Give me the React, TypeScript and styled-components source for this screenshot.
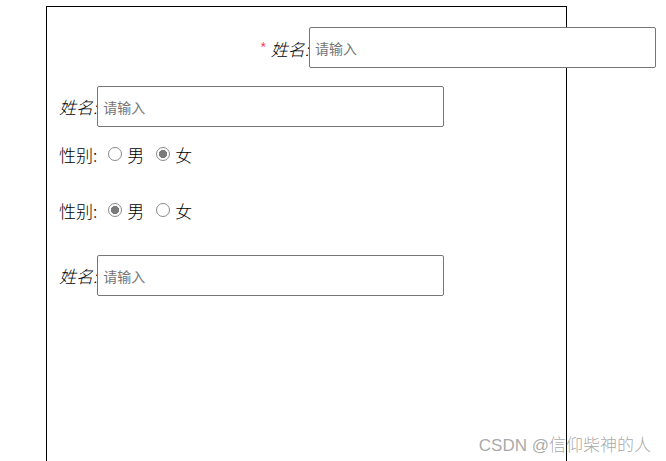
import React from "react";
import styled, { createGlobalStyle } from "styled-components";

const GlobalStyle = createGlobalStyle`
  html, body {
    margin: 0;
    padding: 0;
    background: #fff;
    overflow: hidden;
  }
  body {
    font-family: "Noto Sans CJK SC", "Liberation Sans", sans-serif;
  }
`;

function App() {
  return (
    <Page>
      <GlobalStyle />
      <Box>
        <Row $top={20}>
          <Label $wide>
            <Star>*</Star> 姓名:
          </Label>
          <Input placeholder="请输入" />
        </Row>
        <Row $top={18}>
          <Label>姓名:</Label>
          <Input placeholder="请输入" />
        </Row>
        <RadioRow $top={15}>
          <Plain>性别:</Plain>
          <Option>
            <Radio />男
          </Option>
          <Option>
            <Radio $checked />女
          </Option>
        </RadioRow>
        <RadioRow $top={32}>
          <Plain>性别:</Plain>
          <Option>
            <Radio $checked />男
          </Option>
          <Option>
            <Radio />女
          </Option>
        </RadioRow>
        <Row $top={33}>
          <Label>姓名:</Label>
          <Input placeholder="请输入" />
        </Row>
      </Box>
      <Watermark>CSDN @信仰柴神的人</Watermark>
    </Page>
  );
}

export default App;

const Page = styled.div`
  position: relative;
  width: 666px;
  height: 461px;
  overflow: hidden;
`;

const Box = styled.div`
  margin: 6px 0 0 46px;
  width: 521px;
  height: 520px;
  box-sizing: border-box;
  border: 1px solid #000;
  padding: 0 12px;
  display: flex;
  flex-direction: column;
`;

const Row = styled.div<{ $top: number }>`
  display: flex;
  align-items: center;
  margin-top: ${(p) => p.$top}px;
  height: 41px;
  white-space: nowrap;
`;

const Label = styled.span<{ $wide?: boolean }>`
  font-size: 17px;
  font-weight: 300;
  font-style: italic;
  color: #000;
  ${(p) => (p.$wide ? "width: 250px; text-align: right; flex-shrink: 0;" : "")}
`;

const Star = styled.span`
  color: #ff3b5c;
  font-size: 17px;
  font-style: normal;
  vertical-align: 1px;
`;

const Input = styled.input`
  width: 347px;
  height: 41px;
  flex-shrink: 0;
  box-sizing: border-box;
  border: 1px solid #767676;
  border-radius: 2px;
  padding: 0 5px;
  font-family: "Noto Sans CJK SC", sans-serif;
  font-size: 14px;
  outline: none;
  &::placeholder {
    color: #757575;
  }
`;

const RadioRow = styled.div<{ $top: number }>`
  display: flex;
  align-items: center;
  height: 24px;
  margin-top: ${(p) => p.$top}px;
  font-size: 17px;
  font-weight: 300;
  color: #000;
`;

const Plain = styled.span`
  margin-right: 11px;
`;

const Option = styled.span`
  display: inline-flex;
  align-items: center;
  margin-right: 12px;
`;

const Radio = styled.span<{ $checked?: boolean }>`
  width: 14px;
  height: 14px;
  box-sizing: border-box;
  border-radius: 50%;
  border: 1px solid #8a8a8a;
  margin-right: 5px;
  background: ${(p) =>
    p.$checked
      ? "radial-gradient(circle, #7a7a7a 0 3.8px, #fff 4.4px)"
      : "#fff"};
`;

const Watermark = styled.span`
  position: absolute;
  right: 15px;
  top: 431px;
  font-size: 17px;
  font-weight: 300;
  color: rgba(130, 130, 130, 0.7);
  font-family: "Liberation Sans", "Noto Sans CJK SC", sans-serif;
`;
